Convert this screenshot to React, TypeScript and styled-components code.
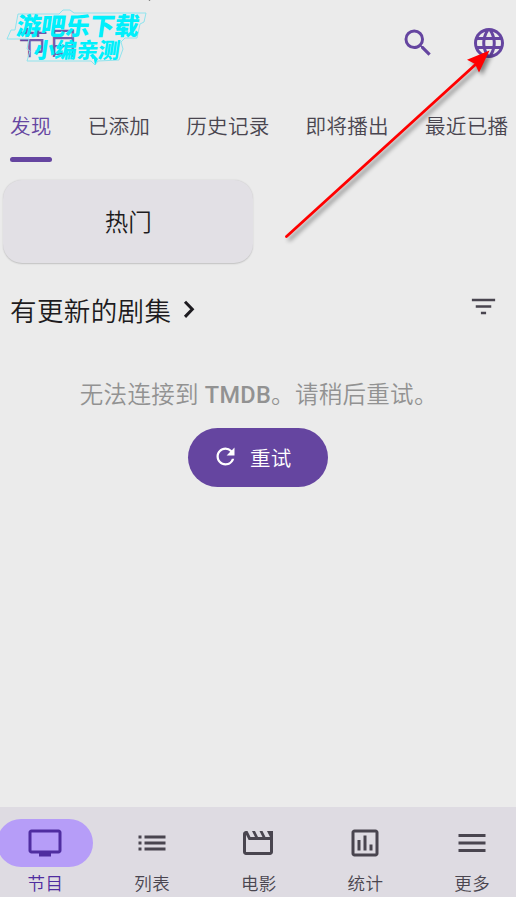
import React from "react";
import styled, { createGlobalStyle } from "styled-components";

const GlobalStyle = createGlobalStyle`
  * { box-sizing: border-box; }
  body { margin: 0; background: #ebebeb; }
`;

const Screen = styled.div`
  position: relative;
  display: flex;
  flex-direction: column;
  width: 516px;
  height: 897px;
  overflow: hidden;
  background: #ebebeb;
  color: #1d1b20;
  font-family: Roboto, "Noto Sans CJK SC", sans-serif;
  font-weight: 350;
  white-space: nowrap;
`;

const Header = styled.header`
  display: flex;
  align-items: center;
  height: 86px;
  padding: 0 9px 0 17px;
`;

const Title = styled.h1`
  flex: 1;
  margin: 2px 0 0;
  font-size: 31px;
  line-height: 40px;
  font-weight: 400;
  color: #6545a0;
`;

const IconButton = styled.button`
  display: flex;
  padding: 0;
  border: 0;
  background: none;
  color: #6545a0;
  & + & { margin-left: 35px; }
`;

const Tabs = styled.nav`
  display: flex;
  gap: 36px;
  height: 75px;
  padding-left: 10px;
`;

const Tab = styled.div<{ $active?: boolean }>`
  flex: none;
  height: 75px;
  padding-top: 26px;
  font-size: 20.6px;
  line-height: 30px;
  letter-spacing: 0.25px;
  color: ${(p) => (p.$active ? "#6545a0" : "#49454f")};
  &::after {
    content: "";
    display: block;
    height: 4.5px;
    margin-top: 15px;
    border-radius: 3px;
    background: ${(p) => (p.$active ? "#6545a0" : "transparent")};
  }
`;

const Card = styled.div`
  display: flex;
  align-items: center;
  justify-content: center;
  width: 250px;
  height: 83px;
  margin: 18.5px 0 0.5px 3.3px;
  padding-bottom: 1px;
  border-radius: 19px;
  background: #e2e0e5;
  box-shadow: 0 0.5px 1.5px rgba(0, 0, 0, 0.18);
  font-size: 23.5px;
`;

const SectionHead = styled.div`
  display: flex;
  align-items: center;
  height: 92px;
  padding: 0 17px 0 10px;
`;

const SectionTitle = styled.h2`
  margin: 0 11px 0 0;
  font-size: 26.5px;
  font-weight: inherit;
  letter-spacing: 0.4px;
`;

const FilterButton = styled(IconButton)`
  margin: 0 0 5px auto;
  color: #49454f;
`;

const ErrorState = styled.section`
  display: flex;
  flex: 1;
  flex-direction: column;
  align-items: center;
  padding-top: 20px;
`;

const Message = styled.p`
  margin: 0 0 0 1.5px;
  font-size: 23.5px;
  line-height: 40px;
  letter-spacing: 0.3px;
  color: #929292;
  b { font-weight: 500; }
`;

const RetryButton = styled.button`
  display: flex;
  align-items: center;
  gap: 11px;
  width: 140px;
  height: 59px;
  margin-top: 12.5px;
  padding: 0 0 1px 24px;
  border: 0;
  border-radius: 30px;
  background: #6545a0;
  color: #fff;
  font-family: inherit;
  font-size: 20.5px;
  font-weight: inherit;
  letter-spacing: 0.3px;
`;

const BottomNav = styled.nav`
  display: grid;
  grid-template-columns: repeat(5, 106.7px);
  flex: none;
  height: 90px;
  margin-left: -8.4px;
  padding-top: 12px;
  background: #dedbe2;
  width: 534px;
`;

const NavItem = styled.div<{ $active?: boolean }>`
  display: flex;
  flex-direction: column;
  align-items: center;
  font-size: 17.5px;
  line-height: 24px;
  letter-spacing: 0.4px;
  text-indent: 1px;
  color: ${(p) => (p.$active ? "#4f2da0" : "#49454f")};
`;

const Pill = styled.span<{ $active?: boolean }>`
  display: flex;
  align-items: center;
  justify-content: center;
  width: 96px;
  height: 47.5px;
  margin-bottom: 5px;
  border-radius: 24px;
  background: ${(p) => (p.$active ? "#b69df8" : "transparent")};
`;

const Overlay = styled.svg`
  position: absolute;
  inset: 0;
  pointer-events: none;
`;

const Stamp = styled.div`
  position: absolute;
  left: 0;
  top: 0;
  color: #00f0fc;
  font-family: "Noto Sans CJK SC", sans-serif;
  font-weight: 900;
`;

const StampLine = styled.div<{ $x: number; $y: number; $size: number }>`
  position: absolute;
  left: ${(p) => p.$x}px;
  top: ${(p) => p.$y}px;
  font-size: ${(p) => p.$size}px;
  line-height: 28px;
  transform: skewX(-8deg);
`;

const paths = {
  search:
    "M15.5 14h-.79l-.28-.27A6.471 6.471 0 0 0 16 9.5 6.5 6.5 0 1 0 9.5 16c1.61 0 3.09-.59 4.23-1.57l.27.28v.79l5 4.99L20.49 19l-4.99-5zm-6 0C7.01 14 5 11.99 5 9.5S7.01 5 9.5 5 14 7.01 14 9.5 11.99 14 9.5 14z",
  globe:
    "M11.99 2C6.47 2 2 6.48 2 12s4.47 10 9.99 10C17.52 22 22 17.52 22 12S17.52 2 11.99 2zm6.93 6h-2.95c-.32-1.25-.78-2.45-1.38-3.56 1.84.63 3.37 1.91 4.33 3.56zM12 4.04c.83 1.2 1.48 2.53 1.91 3.96h-3.82c.43-1.43 1.08-2.76 1.91-3.96zM4.26 14C4.1 13.36 4 12.69 4 12s.1-1.36.26-2h3.38c-.08.66-.14 1.32-.14 2s.06 1.34.14 2H4.26zm.82 2h2.95c.32 1.25.78 2.45 1.38 3.56-1.84-.63-3.37-1.9-4.33-3.56zm2.95-8H5.08c.96-1.66 2.49-2.93 4.33-3.56C8.81 5.55 8.35 6.75 8.03 8zM12 19.96c-.83-1.2-1.48-2.53-1.91-3.96h3.82c-.43 1.43-1.08 2.76-1.91 3.96zM14.34 14H9.66c-.09-.66-.16-1.32-.16-2s.07-1.35.16-2h4.68c.09.65.16 1.32.16 2s-.07 1.34-.16 2zm.25 5.56c.6-1.11 1.06-2.31 1.38-3.56h2.95c-.96 1.65-2.49 2.93-4.33 3.56zM16.36 14c.08-.66.14-1.32.14-2s-.06-1.34-.14-2h3.38c.16.64.26 1.31.26 2s-.1 1.36-.26 2h-3.38z",
  filter: "M10 18h4v-2h-4v2zM3 6v2h18V6H3zm3 7h12v-2H6v2z",
  refresh:
    "M17.65 6.35A7.958 7.958 0 0 0 12 4c-4.42 0-7.99 3.58-7.99 8s3.57 8 7.99 8c3.73 0 6.84-2.55 7.73-6h-2.08A5.99 5.99 0 0 1 12 18c-3.31 0-6-2.69-6-6s2.69-6 6-6c1.66 0 3.14.69 4.22 1.78L13 11h7V4l-2.35 2.35z",
  tv: "M21 3H3c-1.1 0-2 .9-2 2v12c0 1.1.9 2 2 2h5v2h8v-2h5c1.1 0 1.99-.9 1.99-2L23 5c0-1.1-.9-2-2-2zm0 14H3V5h18v12z",
  list: "M3 13h2v-2H3v2zm0 4h2v-2H3v2zm0-8h2V7H3v2zm4 4h14v-2H7v2zm0 4h14v-2H7v2zM7 7v2h14V7H7z",
  movie:
    "M18 4l2 4h-3l-2-4h-2l2 4h-3l-2-4H8l2 4H7L5 4H4c-1.1 0-2 .9-2 2v12c0 1.1.9 2 2 2h16c1.1 0 2-.9 2-2V4h-4zM4 18V6.47L5.76 10H20v8H4z",
  stats:
    "M19 3H5c-1.1 0-2 .9-2 2v14c0 1.1.9 2 2 2h14c1.1 0 2-.9 2-2V5c0-1.1-.9-2-2-2zm0 16H5V5h14v14zM7 10h2v7H7zm4-3h2v10h-2zm4 6h2v4h-2z",
  menu: "M3 18h18v-2H3v2zm0-5h18v-2H3v2zm0-7v2h18V6H3z",
};

function Icon({ name, size = 36 }: { name: keyof typeof paths; size?: number }) {
  return (
    <svg width={size} height={size} viewBox="0 0 24 24" fill="currentColor">
      <path d={paths[name]} />
    </svg>
  );
}

const tabs = ["发现", "已添加", "历史记录", "即将播出", "最近已播"];
const navItems: { icon: keyof typeof paths; label: string }[] = [
  { icon: "tv", label: "节目" },
  { icon: "list", label: "列表" },
  { icon: "movie", label: "电影" },
  { icon: "stats", label: "统计" },
  { icon: "menu", label: "更多" },
];

export default function App() {
  return (
    <Screen>
      <GlobalStyle />
      <Header>
        <Title>节目</Title>
        <IconButton aria-label="搜索"><Icon name="search" /></IconButton>
        <IconButton aria-label="语言"><Icon name="globe" /></IconButton>
      </Header>
      <Tabs>
        {tabs.map((t, i) => <Tab key={t} $active={i === 0}>{t}</Tab>)}
      </Tabs>
      <Card>热门</Card>
      <SectionHead>
        <SectionTitle>有更新的剧集</SectionTitle>
        <svg width="14" height="20" viewBox="0 0 14 20" fill="none" stroke="currentColor" strokeWidth="3">
          <path d="M3 2.7 10.3 10.3 3 17.9" />
        </svg>
        <FilterButton aria-label="筛选"><Icon name="filter" size={31} /></FilterButton>
      </SectionHead>
      <ErrorState>
        <Message>无法连接到 <b>TMDB</b>。请稍后重试。</Message>
        <RetryButton><Icon name="refresh" size={27} />重试</RetryButton>
      </ErrorState>
      <BottomNav>
        {navItems.map((n, i) => (
          <NavItem key={n.label} $active={i === 0}>
            <Pill $active={i === 0}><Icon name={n.icon} /></Pill>
            {n.label}
          </NavItem>
        ))}
      </BottomNav>
      <Overlay width="516" height="260" viewBox="0 0 516 260">
        <path d="M18 14H59L63 10H70L74 13H146L144 22 140 24 137 38H125L121 42 123 49 119 60 98 61 95 65 91 61H27L30 51 27 49 29 39H7L11 30H15Z" fill="#e5f1f3" fillOpacity=".12" stroke="#8fe4ee" strokeWidth="1" />
        <path d="M93 54 95 65 98 59Z" fill="#00f0fc" />
        <circle cx="149.5" cy="0" r="0.8" fill="#555" />
        <g filter="drop-shadow(3px 3px 2px rgba(0,0,0,.45))">
          <path d="M286.5 236.5 475 65" stroke="#f00" strokeWidth="2.8" strokeLinecap="round" />
          <path d="M489.5 50.5 467 59.8 475 64 479 72.5Z" fill="#f00" />
        </g>
      </Overlay>
      <Stamp>
        <StampLine $x={17} $y={11} $size={24.5}>游吧乐下载</StampLine>
        <StampLine $x={34} $y={34.5} $size={21.5}>小编亲测</StampLine>
      </Stamp>
    </Screen>
  );
}
